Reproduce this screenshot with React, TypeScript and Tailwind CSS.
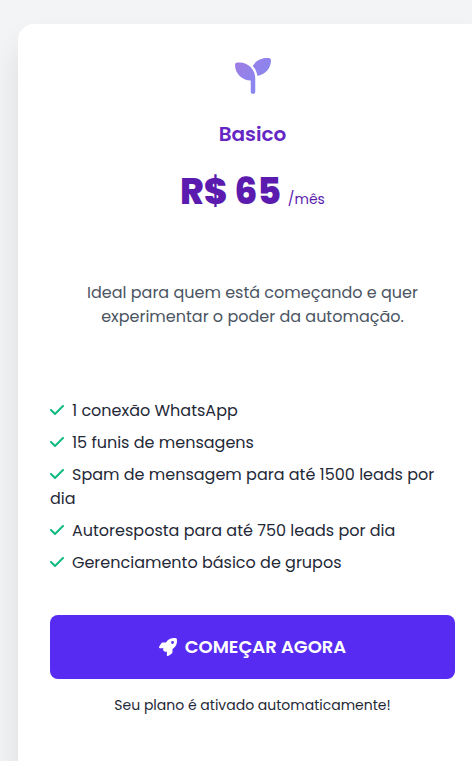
import { FaCheck, FaRocket, FaSeedling } from "react-icons/fa6";

const features = [
  "1 conexão WhatsApp",
  "15 funis de mensagens",
  "Spam de mensagem para até 1500 leads por dia",
  "Autoresposta para até 750 leads por dia",
  "Gerenciamento básico de grupos",
];

export default function App() {
  return (
    <main className="h-screen overflow-hidden bg-[#f3f4f6] pt-6 pl-[18px] font-[Poppins,Inter,sans-serif] text-[#1f2937]">
      <article className="-mr-[15px] flex min-h-screen flex-col rounded-2xl bg-white p-8 shadow-[0_20px_32px_rgb(0_0_0/0.1)]">
        <header className="flex flex-col items-center text-center">
          <svg width="0" height="0" className="absolute" aria-hidden="true">
            <defs>
              <linearGradient id="leaf" x1="0" y1="0" x2="1" y2="1">
                <stop offset="0" stopColor="#a07ce2" />
                <stop offset="1" stopColor="#7f8bf5" />
              </linearGradient>
            </defs>
          </svg>
          <FaSeedling className="my-0.5 size-9" style={{ fill: "url(#leaf)" }} />
          <h2 className="mt-6 text-xl leading-7 font-semibold text-[#6626c4]">Basico</h2>
          <p className="mt-6 text-4xl leading-10 font-extrabold text-[#5b1bae]">
            R$ 65 <span className="text-sm font-normal">/mês</span>
          </p>
        </header>
        <p className="mt-[69px] px-8 text-center text-base text-[#4b5563]">
          Ideal para quem está começando e quer experimentar o poder da automação.
        </p>
        <ul className="mt-[70px] space-y-2">
          {features.map((feature) => (
            <li key={feature} className="text-base">
              <FaCheck className="mr-2 inline h-4 w-3.5 align-[-2px] text-[#10b981]" />
              {feature}
            </li>
          ))}
        </ul>
        <button
          type="button"
          className="mt-10 flex h-16 w-full items-center justify-center gap-2 rounded-lg bg-[#572bf1] text-lg font-semibold text-white"
        >
          <FaRocket className="size-[18px]" />
          COMEÇAR AGORA
        </button>
        <p className="mt-4 text-center text-sm">Seu plano é ativado automaticamente!</p>
      </article>
    </main>
  );
}
